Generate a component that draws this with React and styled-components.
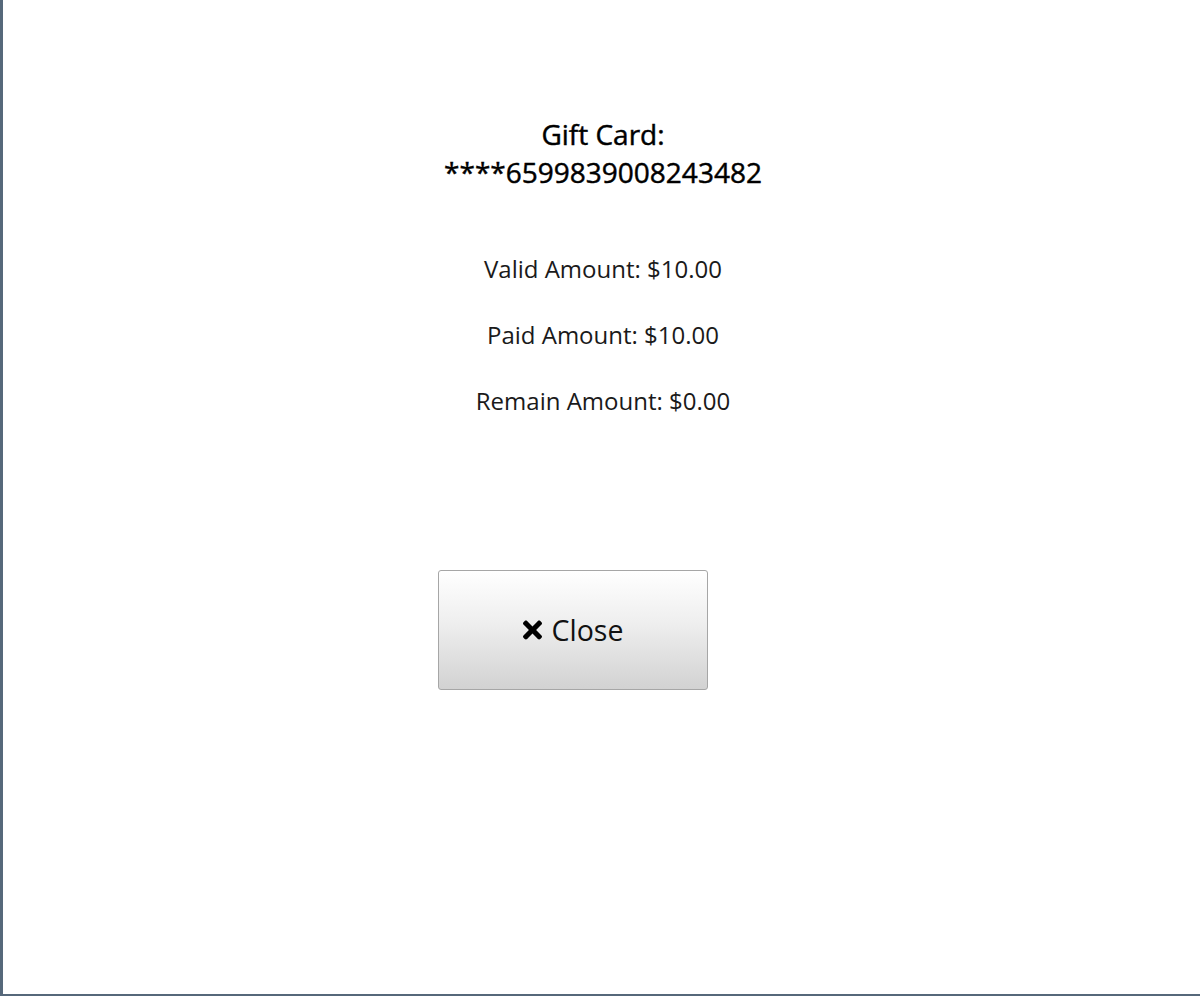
import React from "react";
import styled, { createGlobalStyle } from "styled-components";
import { FaTimes } from "react-icons/fa";

const Global = createGlobalStyle`
  html, body { margin: 0; padding: 0; background: #ffffff; }
  body { font-family: "Open Sans", "Noto Sans", sans-serif; color: #111; }
`;

const Page = styled.div`
  box-sizing: border-box;
  width: 1200px;
  height: 996px;
  border-left: 3px solid #56687a;
  border-bottom: 2px solid #56687a;
  background: #fff;
  display: flex;
  flex-direction: column;
  align-items: center;
  padding: 115px 0 0 3px;
`;

const Title = styled.h1`
  margin: 0;
  font-size: 28px;
  font-weight: 400;
  -webkit-text-stroke: 0.45px #000;
  line-height: 38px;
  text-align: center;
  color: #000;
`;

const Amounts = styled.div`
  margin-top: 63px;
  display: flex;
  flex-direction: column;
  align-items: center;
  gap: 36px;
`;

const Amount = styled.div`
  font-size: 24px;
  line-height: 30px;
  color: #1a1a1a;
`;

const Actions = styled.div`
  align-self: stretch;
  padding-left: 432px;
  margin-top: 154px;
`;

const Button = styled.button`
  width: 270px;
  height: 120px;
  box-sizing: border-box;
  border: 1px solid #a6a6a6;
  border-radius: 3px;
  background: linear-gradient(to bottom, #ffffff 0%, #eeeeee 45%, #d2d2d2 100%);
  font-family: "Open Sans", "Noto Sans", sans-serif;
  font-size: 28.5px;
  color: #111;
  display: flex;
  align-items: center;
  justify-content: center;
  gap: 10px;
  padding: 0;
  cursor: pointer;
  svg { width: 19px; height: 28px; color: #000; }
`;

export default function App() {
  return (
    <>
      <Global />
      <Page>
        <Title>
          Gift Card:
          <br />
          ****6599839008243482
        </Title>
        <Amounts>
          <Amount>Valid Amount: $10.00</Amount>
          <Amount>Paid Amount: $10.00</Amount>
          <Amount>Remain Amount: $0.00</Amount>
        </Amounts>
        <Actions>
          <Button>
            <FaTimes />
            <span>Close</span>
          </Button>
        </Actions>
      </Page>
    </>
  );
}
